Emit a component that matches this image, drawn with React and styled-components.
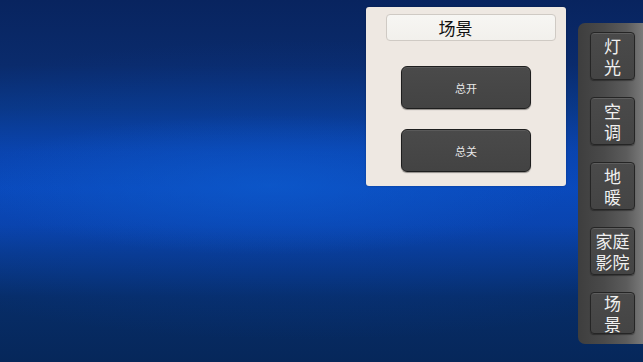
import React from "react";
import styled, { createGlobalStyle } from "styled-components";

const GlobalStyle = createGlobalStyle`
  html, body {
    margin: 0;
    padding: 0;
    width: 100%;
    height: 100%;
    overflow: hidden;
  }
  body {
    font-family: "Noto Sans CJK SC", "Noto Sans", sans-serif;
  }
`;

const NAV_ITEMS = [
  { id: 1, title: "灯光" },
  { id: 2, title: "空调" },
  { id: 3, title: "地暖" },
  { id: 4, title: "家庭影院" },
  { id: 5, title: "场景" },
];

const StyledScreen = styled.div`
  width: 643px;
  height: 362px;
  display: flex;
  align-items: flex-start;
  justify-content: flex-end;
  background:
    radial-gradient(ellipse 300px 70px at 270px 185px, rgba(14, 96, 210, 0.55), rgba(14, 96, 210, 0) 100%),
    radial-gradient(ellipse 520px 150px at 300px 190px, rgba(8, 70, 190, 0.35), rgba(8, 70, 190, 0) 100%),
    linear-gradient(
      180deg,
      #08245f 0%,
      #0a2b6c 18%,
      #0a3785 30%,
      #0a44ad 42%,
      #0a4abb 52%,
      #0a44ad 62%,
      #093a8e 70%,
      #072d68 82%,
      #06275a 100%
    );
`;

const StyledScenePanel = styled.section`
  margin-top: 7px;
  margin-right: 12px;
  width: 200px;
  height: 179px;
  box-sizing: border-box;
  background: #eee8e2;
  border-radius: 3px;
  padding: 7px 10px 0 20px;
  display: flex;
  flex-direction: column;
  align-items: center;
  box-shadow: 0 0 2px rgba(0, 0, 0, 0.3);
`;

const StyledPanelTitle = styled.div`
  width: 170px;
  height: 27px;
  box-sizing: border-box;
  padding-right: 31px;
  border: 1px solid #cfcac4;
  border-radius: 4px;
  background: linear-gradient(180deg, #f7f6f3 0%, #f2f0ec 100%);
  display: flex;
  align-items: center;
  justify-content: center;
  font-size: 17px;
  color: #111;
  margin-bottom: 25px;
`;

const StyledSceneButton = styled.button`
  width: 130px;
  height: 43px;
  box-sizing: border-box;
  margin-left: -10px;
  margin-bottom: ${(p) => (p.last ? "0" : "20px")};
  border: 1px solid #1e1e1e;
  border-radius: 6px;
  background: linear-gradient(180deg, #4a4a4a 0%, #434343 100%);
  box-shadow: inset 0 1px 0 #5a5a5a, 0 1px 1px rgba(0, 0, 0, 0.4);
  color: #e8e8e8;
  font-family: "Noto Sans CJK SC", sans-serif;
  font-size: 11px;
  padding: 0;
`;

const StyledSideBar = styled.nav`
  margin-top: 23px;
  width: 65px;
  height: 321px;
  box-sizing: border-box;
  border-radius: 7px 0 0 7px;
  background: linear-gradient(90deg, #3e3e3e 0%, #4a4a4a 40%, #5c5c5c 75%, #7a7a7a 100%);
  padding: 9px 8px 0 12px;
  display: flex;
  flex-direction: column;
  gap: 17px;
`;

const StyledNavButton = styled.button`
  flex-shrink: 0;
  width: 45px;
  height: ${(p) => (p.short ? "42px" : "48px")};
  box-sizing: border-box;
  border: 1px solid #252525;
  border-radius: 4px;
  background: linear-gradient(180deg, #4a4a4a 0%, #444 100%);
  box-shadow: inset 0 1px 0 #5e5e5e, 0 1px 1px rgba(0, 0, 0, 0.35);
  color: #f0f0f0;
  font-family: "Noto Sans CJK SC", sans-serif;
  font-size: 17px;
  padding: 0;
  display: flex;
  align-items: center;
  justify-content: center;
`;

const StyledNavLabel = styled.span`
  flex-shrink: 0;
  display: block;
  width: ${(p) => (p.wide ? "36px" : "18px")};
  line-height: 21px;
  text-align: center;
  word-break: break-all;
`;

const App = () => {
  return (
    <>
      <GlobalStyle />
      <StyledScreen>
        <StyledScenePanel>
          <StyledPanelTitle>场景</StyledPanelTitle>
          <StyledSceneButton>总开</StyledSceneButton>
          <StyledSceneButton last>总关</StyledSceneButton>
        </StyledScenePanel>
        <StyledSideBar>
          {NAV_ITEMS.map((item) => (
            <StyledNavButton key={item.id} short={item.id === 5}>
              <StyledNavLabel wide={item.title.length > 2}>{item.title}</StyledNavLabel>
            </StyledNavButton>
          ))}
        </StyledSideBar>
      </StyledScreen>
    </>
  );
};

export default App;
